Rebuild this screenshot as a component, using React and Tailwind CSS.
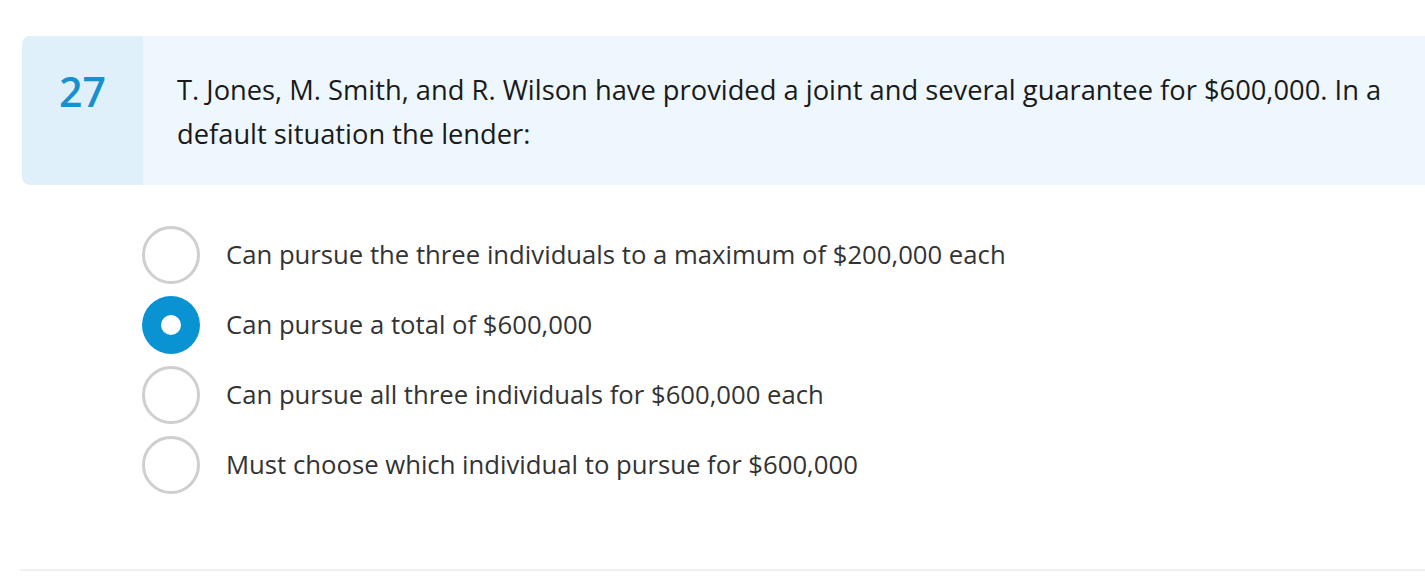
import React from "react";

const options = [
  "Can pursue the three individuals to a maximum of $200,000 each",
  "Can pursue a total of $600,000",
  "Can pursue all three individuals for $600,000 each",
  "Must choose which individual to pursue for $600,000",
];

export default function App() {
  return (
    <div className="w-[1425px] h-[588px] bg-white overflow-hidden" style={{ fontFamily: '"Open Sans", sans-serif' }}>
      <div className="pt-[36px] pl-[22px]">
        <div className="flex h-[149px] rounded-l-[8px] overflow-hidden">
          <div className="w-[121px] shrink-0 bg-[#dff0fa] flex justify-center pt-[27px]">
            <span className="text-[41px] leading-[56px] font-semibold text-[#1890cf]">27</span>
          </div>
          <div className="flex-1 bg-[#eef7fd] pl-[34px] pr-[10px] pt-[32px]">
            <p className="text-[27.3px] leading-[44px] text-[#1a1a1a]">
              T. Jones, M. Smith, and R. Wilson have provided a joint and several guarantee for $600,000. In a default situation the lender:
            </p>
          </div>
        </div>
      </div>
      <div className="pl-[142px] pt-[41px] flex flex-col gap-[12px]">
        {options.map((o, i) => (
          <div key={i} className="flex items-center h-[58px]">
            {i === 1 ? (
              <div className="w-[58px] h-[58px] rounded-full bg-[#0a93d3] flex items-center justify-center shrink-0">
                <div className="w-[20px] h-[20px] rounded-full bg-white" />
              </div>
            ) : (
              <div className="w-[58px] h-[58px] rounded-full border-[3px] border-[#cfcfcf] bg-white shrink-0" />
            )}
            <span className="ml-[26px] text-[25.7px] text-[#333]">{o}</span>
          </div>
        ))}
      </div>
      <div className="ml-[20px] mt-[75px] h-[2px] bg-[#f0f0f0]" />
    </div>
  );
}
